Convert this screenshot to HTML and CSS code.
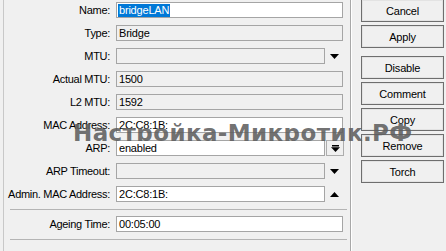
FILE: index.html
```html
<!DOCTYPE html>
<html lang="ru">
<head>
    <title>Interface &lt;bridgeLAN&gt;</title>
    <meta charset="utf-8">
    <link rel="stylesheet" href="styles.css">
</head>

<body>
    <div id="janela">
        <div class="form">
            <div class="linha">
                <label>Name:</label>
                <div class="campo editavel"><span class="selecionado">bridgeLAN</span></div>
            </div>
            <div class="linha">
                <label>Type:</label>
                <div class="campo">Bridge</div>
            </div>
            <div class="linha com-seta">
                <label>MTU:</label>
                <div class="campo"></div>
                <svg class="seta" width="9" height="5" viewBox="0 0 9 5"><polygon points="0,0 9,0 4.5,5" fill="#000"/></svg>
            </div>
            <div class="linha">
                <label>Actual MTU:</label>
                <div class="campo">1500</div>
            </div>
            <div class="linha">
                <label>L2 MTU:</label>
                <div class="campo">1592</div>
            </div>
            <div class="linha">
                <label>MAC Address:</label>
                <div class="campo editavel">2C:C8:1B:</div>
            </div>
            <div class="linha com-seta">
                <label>ARP:</label>
                <div class="campo editavel">enabled</div>
                <div class="botao-seta">
                    <svg width="9" height="7" viewBox="0 0 9 7"><rect x="1" y="0" width="7" height="1.5" fill="#000"/><polygon points="0,2.2 9,2.2 4.5,7" fill="#000"/></svg>
                </div>
            </div>
            <div class="linha com-seta">
                <label>ARP Timeout:</label>
                <div class="campo"></div>
                <svg class="seta" width="9" height="5" viewBox="0 0 9 5"><polygon points="0,0 9,0 4.5,5" fill="#000"/></svg>
            </div>
            <div class="linha com-seta">
                <label>Admin. MAC Address:</label>
                <div class="campo editavel">2C:C8:1B:</div>
                <svg class="seta" width="9" height="5" viewBox="0 0 9 5"><polygon points="0,5 9,5 4.5,0" fill="#000"/></svg>
            </div>

            <hr class="separador">

            <div class="linha">
                <label>Ageing Time:</label>
                <div class="campo editavel">00:05:00</div>
            </div>

            <hr class="separador">
        </div>

        <div class="botoes">
            <button class="primeiro">Cancel</button>
            <button>Apply</button>
            <button class="grupo">Disable</button>
            <button>Comment</button>
            <button>Copy</button>
            <button>Remove</button>
            <button>Torch</button>
        </div>

        <!-- marca d'agua por cima da imagem -->
        <div class="marca">Настройка-Микротик.РФ</div>
    </div>
</body>
</html>
```

FILE: styles.css
```css
body {
    margin: 0;
    background: #f0f0f0;
    font-family: "Liberation Sans", Arial, sans-serif;
    font-size: 11px;
    color: #000;
    overflow: hidden;
}

#janela {
    position: relative;
    display: flex;
    height: 251px;
}

.form {
    width: 346px;
    margin-left: 3px;
    border-left: 1px solid #c8c8c8;
    border-right: 1px solid #a8a8a8;
    box-shadow: 1px 0 0 #fff;
    padding-top: 2px;
}

.linha {
    display: grid;
    grid-template-columns: 112px 227px;
    height: 16px;
    margin-bottom: 7px;
    align-items: center;
}

.linha.com-seta {
    grid-template-columns: 112px 209px 18px;
}

label {
    text-align: right;
    padding-right: 6px;
    letter-spacing: -0.3px;
    white-space: nowrap;
    line-height: 16px;
}

.campo {
    box-sizing: border-box;
    height: 16px;
    border: 1px solid #a5a5a5;
    background: #f0f0f0;
    padding-left: 2px;
    line-height: 14px;
    letter-spacing: -0.2px;
    white-space: nowrap;
    overflow: hidden;
}

.campo.editavel {
    background: #fff;
}

.selecionado {
    background: #0078d7;
    color: #fff;
    display: inline-block;
    line-height: 13px;
    padding: 0 1px;
    margin-left: -1px;
}

.seta {
    justify-self: center;
    margin-left: 1px;
}

.botao-seta {
    box-sizing: border-box;
    width: 18px;
    height: 16px;
    margin-left: 1px;
    border: 1px solid #adadad;
    background: #f0f0f0;
    display: flex;
    align-items: center;
    justify-content: center;
}

.separador {
    border: 0;
    border-top: 1px solid #b4b4b4;
    height: 0;
    margin: 1px 3px 6px 6px;
}

.botoes {
    display: flex;
    flex-direction: column;
    gap: 3px;
    padding-left: 10px;
}

button {
    width: 83px;
    height: 23px;
    box-sizing: border-box;
    border: 1px solid #6e6e6e;
    box-shadow: inset 0 0 0 1px #e3e3e3;
    background: #f0f0f0;
    font-family: "Liberation Sans", Arial, sans-serif;
    font-size: 11px;
    letter-spacing: -0.2px;
    color: #000;
    padding: 0;
}

.primeiro {
    margin-top: -1px;
}

.grupo {
    margin-top: 5px;
}

.marca {
    position: absolute;
    left: 73px;
    top: 122px;
    height: 19px;
    overflow: hidden;
    font-family: "DejaVu Sans", sans-serif;
    font-weight: bold;
    font-size: 23px;
    line-height: 23px;
    letter-spacing: 0.4px;
    color: rgba(95, 95, 95, 0.9);
    white-space: nowrap;
}
```
